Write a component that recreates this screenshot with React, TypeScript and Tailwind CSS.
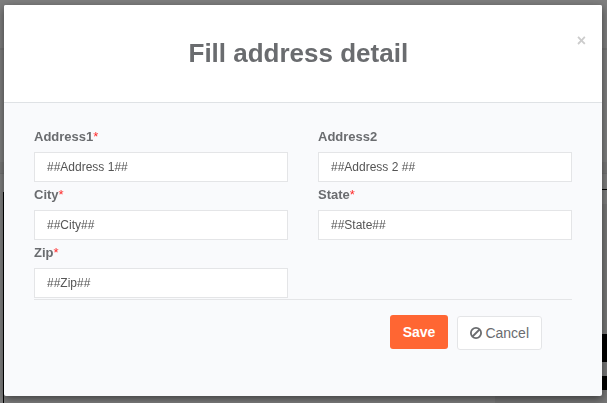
import type { ReactNode } from "react";

type FieldProps = {
  id: string;
  label: string;
  value: string;
  required?: boolean;
};

function Field({ id, label, value, required }: FieldProps) {
  return (
    <div className="flex flex-col">
      <label htmlFor={id} className="flex h-7 items-start pt-[3px] text-[13px] leading-5 font-bold text-[#6a6c6f]">
        {label}
        {required && <span className="font-normal text-[#ff2a2a]">*</span>}
      </label>
      <input
        id={id}
        type="text"
        defaultValue={value}
        required={required}
        className="h-[30px] w-full border border-[#e4e5e7] bg-white px-3 text-xs text-[#555555] outline-none"
      />
    </div>
  );
}

function BanIcon() {
  return (
    <svg viewBox="0 0 12 12" className="size-3" fill="none" stroke="currentColor" strokeWidth="1.8" aria-hidden="true">
      <circle cx="6" cy="6" r="5.1" />
      <path d="M2.5 9.5 9.5 2.5" />
    </svg>
  );
}

function Backdrop() {
  return (
    <div aria-hidden="true" className="flex h-screen flex-col bg-[#7f7f7f]">
      <div className="h-[50px] border-b-2 border-[#757575]" />
      <div className="h-28" />
      <div className="h-3 border-b border-[#727272] bg-[#787878]" />
      <div className="flex grow">
        <div className="mt-[18px] w-1 border-r border-black" />
        <div className="flex grow flex-col">
          <div className="h-4 border-b border-black" />
          <div className="h-3.5" />
          <div className="h-[130px] bg-[#777777]" />
          <div className="h-7 bg-black" />
          <div className="h-3.5 bg-[#777777]" />
          <div className="h-3.5 bg-black" />
          <div className="flex grow justify-end">
            <div className="w-28 bg-[#777777]" />
          </div>
        </div>
      </div>
    </div>
  );
}

function Dialog({ title, children }: { title: string; children: ReactNode }) {
  return (
    <div
      role="dialog"
      aria-modal="true"
      aria-labelledby="dialog-title"
      className="overflow-hidden rounded-xs bg-[#f9fafc] shadow-[0_3px_9px_rgba(0,0,0,0.5)]"
    >
      <header className="flex items-start border-b border-[#dfe2e5] bg-white px-4 pt-[30px] pb-[33px]">
        <h1 id="dialog-title" className="grow pt-0.5 text-center text-[26px] leading-8 font-bold text-[#6a6c6f]">
          {title}
        </h1>
        <button
          type="button"
          aria-label="Close"
          className="text-base leading-3 font-bold text-[#cccccc]"
        >
          ×
        </button>
      </header>
      {children}
    </div>
  );
}

export default function App() {
  return (
    <div className="font-['Liberation_Sans',Arial,sans-serif]">
      <Backdrop />
      <div className="fixed inset-0 pt-[5px] pr-[5px] pl-1">
        <Dialog title="Fill address detail">
          <form className="px-[30px] pt-[21px] pb-[46px]">
            <div className="grid grid-cols-2 gap-x-[30px] border-b border-[#e4e5e7] pb-px">
              <Field id="address1" label="Address1" value="##Address 1##" required />
              <Field id="address2" label="Address2" value="##Address 2 ##" />
              <Field id="city" label="City" value="##City##" required />
              <Field id="state" label="State" value="##State##" required />
              <Field id="zip" label="Zip" value="##Zip##" required />
            </div>
            <div className="flex items-end justify-end gap-[9px] pt-[15px] pr-[30px]">
              <button
                type="button"
                className="mb-px h-[34px] rounded-[3px] bg-[#ff6633] px-[13px] text-sm font-bold text-white"
              >
                Save
              </button>
              <button
                type="button"
                className="flex h-[34px] items-center gap-[3px] rounded-[3px] border border-[#e4e5e7] bg-white px-3 text-sm text-[#6a6c6f]"
              >
                <BanIcon />
                Cancel
              </button>
            </div>
          </form>
        </Dialog>
      </div>
    </div>
  );
}
